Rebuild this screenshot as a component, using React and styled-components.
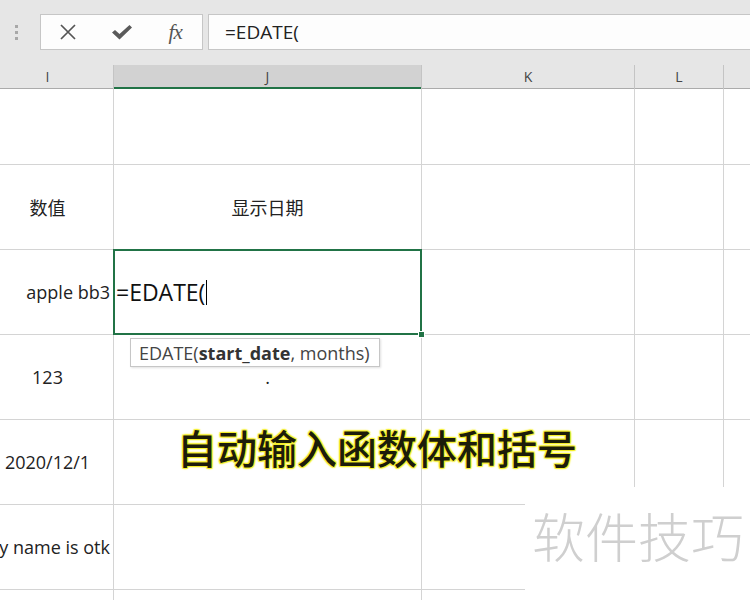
import styled, { createGlobalStyle } from 'styled-components';

const GlobalStyle = createGlobalStyle`
  html, body {
    margin: 0;
    padding: 0;
    background: #fff;
  }
  body {
    font-family: "Open Sans", "Noto Sans CJK SC", sans-serif;
  }
`;

const COLS = '131px 307px 212px 88px 1fr';
const GREEN = '#217346';

const Page = styled.div`
  position: relative;
  width: 750px;
  height: 600px;
  overflow: hidden;
  background: #fff;
`;

const TopBar = styled.div`
  height: 65px;
  box-sizing: border-box;
  padding-top: 14px;
  background: #e6e6e6;
  display: flex;
  align-items: flex-start;
`;

const Grip = styled.div`
  width: 40px;
  height: 36px;
  box-sizing: border-box;
  padding-left: 15px;
  display: flex;
  flex-direction: column;
  justify-content: center;
  gap: 3px;

  span {
    width: 3px;
    height: 3px;
    background: #a8a8a8;
  }
`;

const ButtonBox = styled.div`
  width: 163px;
  height: 36px;
  box-sizing: border-box;
  background: #fdfdfd;
  border: 1px solid #c6c6c6;
  display: flex;
  align-items: center;
`;

const BarButton = styled.div`
  width: 54px;
  height: 34px;
  display: flex;
  align-items: center;
  justify-content: center;
  color: #555;
`;

const Fx = styled.span`
  font-family: "Liberation Serif", serif;
  font-style: italic;
  font-size: 21px;
  letter-spacing: -1px;
  color: #555;
`;

const FormulaInput = styled.div`
  flex: 1;
  height: 36px;
  margin-left: 5px;
  margin-right: -2px;
  box-sizing: border-box;
  background: #fdfdfd;
  border: 1px solid #c6c6c6;
  padding-left: 16px;
  display: flex;
  align-items: center;
  font-size: 19px;
  color: #222;
`;

const HeaderRow = styled.div`
  display: grid;
  grid-template-columns: ${COLS};
  column-gap: 1px;
  margin-left: -18px;
  height: 24px;
  background: #c4c4c4;
`;

const HeaderCell = styled.div`
  box-sizing: border-box;
  height: 24px;
  background: ${({ selected }) => (selected ? '#d2d2d2' : '#e6e6e6')};
  border-bottom: ${({ selected }) => (selected ? `2px solid ${GREEN}` : '1px solid #ababab')};
  display: flex;
  align-items: center;
  justify-content: center;
  font-size: 14px;
  color: #444;
`;

const Sheet = styled.div`
  display: grid;
  grid-template-columns: ${COLS};
  grid-template-rows: 75px repeat(6, 84px);
  gap: 1px;
  margin-left: -18px;
  background: #d4d4d4;
`;

const Cell = styled.div`
  position: relative;
  background: #fff;
  display: flex;
  align-items: center;
  justify-content: ${({ align }) => (align === 'right' ? 'flex-end' : align === 'left' ? 'flex-start' : 'center')};
  padding: 0 3px;
  white-space: nowrap;
  font-size: 18px;
  color: #222;
`;

const ActiveCell = styled(Cell)`
  z-index: 2;
  padding-left: 2px;
  outline: 2px solid ${GREEN};
  outline-offset: -1px;
  font-size: 23px;
  color: #111;

  &::after {
    content: '';
    position: absolute;
    right: -4px;
    bottom: -4px;
    width: 5px;
    height: 5px;
    background: ${GREEN};
    border: 1px solid #fff;
  }
`;

const Caret = styled.span`
  display: inline-block;
  width: 1px;
  height: 25px;
  margin-left: 1px;
  background: #000;
`;

const ArgTip = styled.div`
  position: absolute;
  left: 16px;
  top: 88px;
  height: 29px;
  box-sizing: border-box;
  padding: 0 9px 0 8px;
  background: #fff;
  border: 1px solid #c6c6c6;
  box-shadow: 1px 1px 2px rgba(0, 0, 0, 0.12);
  display: flex;
  align-items: center;
  font-size: 18px;
  color: #444;

  b {
    font-weight: 700;
    color: #333;
  }
`;

const Caption = styled.div`
  position: absolute;
  left: 177px;
  top: 427px;
  font-family: "Noto Sans CJK SC", sans-serif;
  font-weight: 500;
  font-size: 40px;
  line-height: 1;
  color: #1c1c0a;
  text-shadow:
    1px 1px 1px #f4ee2a, -1px -1px 1px #f4ee2a, 1px -1px 1px #f4ee2a, -1px 1px 1px #f4ee2a,
    0 0 3px #fff45a;
`;

const Watermark = styled.div`
  position: absolute;
  left: 525px;
  top: 487px;
  width: 225px;
  height: 113px;
  background: #fff;
  box-sizing: border-box;
  padding: 22px 0 0 7px;
  font-family: "Noto Sans CJK SC", sans-serif;
  font-weight: 300;
  font-size: 53px;
  line-height: 1;
  color: #cfcfcf;
`;

function CloseIcon() {
  return (
    <svg width="18" height="18" viewBox="0 0 18 18">
      <path d="M2 2 L16 16 M16 2 L2 16" stroke="#555" strokeWidth="1.7" fill="none" />
    </svg>
  );
}

function CheckIcon() {
  return (
    <svg width="20" height="15" viewBox="0 0 20 15">
      <polygon points="0,7.5 3,5 7.5,9 17.5,0 20,2.5 7.5,14.5" fill="#5a5a5a" />
    </svg>
  );
}

const columns = ['I', 'J', 'K', 'L', ''];

const rows = [
  [{}, {}],
  [{ text: '数值' }, { text: '显示日期' }],
  [{ text: 'apple bb3', align: 'right' }, { active: true }],
  [{ text: '123' }, { text: '.' }],
  [{ text: '2020/12/1' }, {}],
  [{ text: 'my name is otk', align: 'right' }, {}],
  [{}, {}],
];

export default function App() {
  return (
    <Page>
      <GlobalStyle />
      <TopBar>
        <Grip>
          <span />
          <span />
          <span />
        </Grip>
        <ButtonBox>
          <BarButton>
            <CloseIcon />
          </BarButton>
          <BarButton>
            <CheckIcon />
          </BarButton>
          <BarButton>
            <Fx>fx</Fx>
          </BarButton>
        </ButtonBox>
        <FormulaInput>=EDATE(</FormulaInput>
      </TopBar>

      <HeaderRow>
        {columns.map((c, i) => (
          <HeaderCell key={i} selected={c === 'J'}>
            {c}
          </HeaderCell>
        ))}
      </HeaderRow>

      <Sheet>
        {rows.map((row, r) =>
          columns.map((c, i) => {
            const cell = row[i] || {};
            if (cell.active) {
              return (
                <ActiveCell key={`${r}-${i}`} align="left">
                  =EDATE(
                  <Caret />
                  <ArgTip>
                    EDATE(<b>start_date</b>, months)
                  </ArgTip>
                </ActiveCell>
              );
            }
            return (
              <Cell key={`${r}-${i}`} align={cell.align}>
                {cell.text}
              </Cell>
            );
          })
        )}
      </Sheet>

      <Caption>自动输入函数体和括号</Caption>
      <Watermark>软件技巧</Watermark>
    </Page>
  );
}
